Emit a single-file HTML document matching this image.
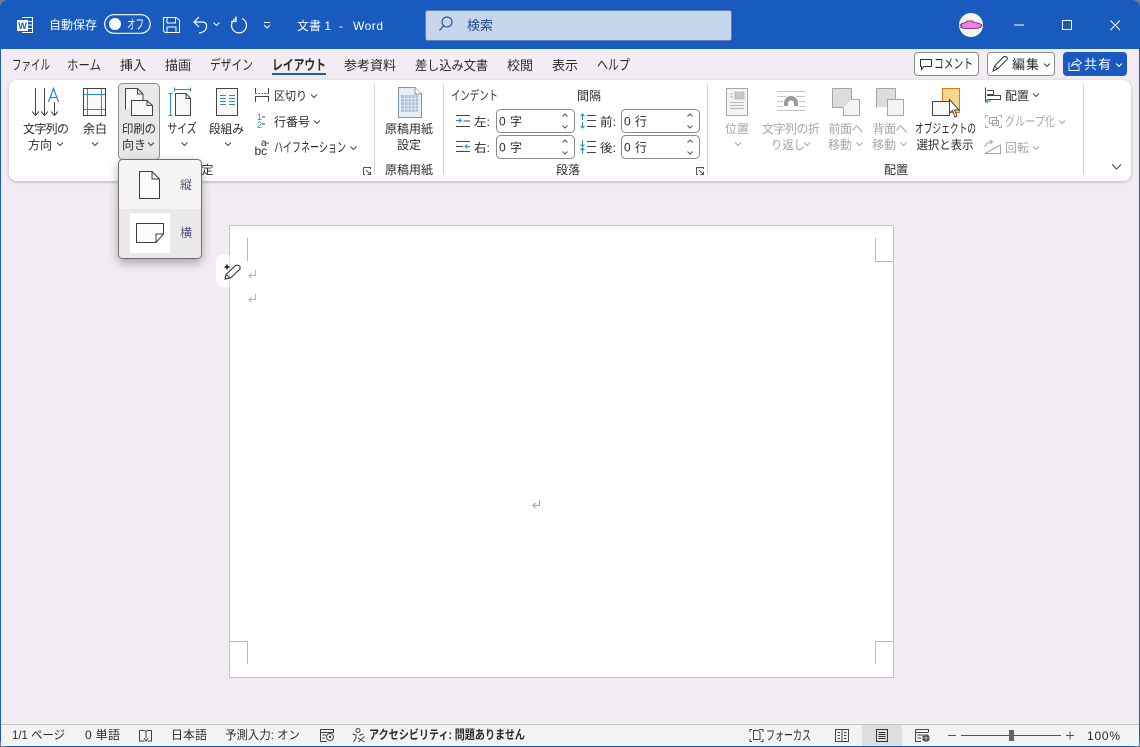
<!DOCTYPE html>
<html lang="ja"><head><meta charset="utf-8"><title>文書 1 - Word</title>
<style>
html,body{margin:0;padding:0;width:1140px;height:747px;overflow:hidden;background:#fff}
svg{display:block}
text{font-family:"Liberation Sans","Noto Sans CJK JP",sans-serif;font-size:12px;fill:#2b2b2b;dominant-baseline:auto}
.w text,text.w{fill:#fff}
.d text,text.d{fill:#a6a6a6}
.ln{fill:none;stroke:#444;stroke-width:1}
.bl{fill:none;stroke:#2a8ad4;stroke-width:1}
.gr{fill:none;stroke:#a6a6a6;stroke-width:1}
.chev{fill:none;stroke:#444;stroke-width:1}
.chevd{fill:none;stroke:#a6a6a6;stroke-width:1}
.box{fill:#fff;stroke:#8a8a8a;stroke-width:1}
.sp{fill:none;stroke:#555;stroke-width:1}
</style></head><body>
<svg width="1140" height="747" viewBox="0 0 1140 747" xmlns="http://www.w3.org/2000/svg">
<defs>
<filter id="sh" x="-5%" y="-20%" width="110%" height="140%"><feDropShadow dx="0" dy="1" stdDeviation="1.5" flood-color="#000" flood-opacity=".25"/></filter>
<filter id="sh2" x="-30%" y="-30%" width="160%" height="160%"><feDropShadow dx="0" dy="4" stdDeviation="5" flood-color="#000" flood-opacity=".3"/></filter>
<path id="cv" d="M-3 -1.5L0 1.5L3 -1.5"/>
<linearGradient id="rb" x1="0" y1="0" x2="1" y2="0"><stop offset="0" stop-color="#c8741c"/><stop offset=".35" stop-color="#2a5a8c"/><stop offset=".7" stop-color="#6a2a7c"/><stop offset="1" stop-color="#1a5a9c"/></linearGradient>
</defs>
<!-- window -->
<rect x="0" y="0" width="1140" height="747" fill="#6b7f9f"/>
<rect x="0" y="0" width="1140" height="747" rx="8" fill="#185abd"/>
<rect x="1" y="49" width="1138" height="697" rx="0" fill="#f3ecf3"/>
<path d="M1 738V724H1139V738Q1139 746 1131 746H9Q1 746 1 738Z" fill="#f3f3f3"/>
<path d="M1 724.5H1139" stroke="#c6c6c6"/>
<!-- title bar -->
<g class="w">
<path d="M22 17.5H32.5V32.5H22" fill="none" stroke="#fff"/><path d="M27 21.5H32M27 25H32M27 28.500H32" stroke="#fff"/>
<rect x="17" y="20" width="11" height="11" fill="#fff"/><text x="22.500" y="29" text-anchor="middle" style="font-size:9px;font-weight:bold;fill:#185abd">W</text>
<text x="49" y="29" textLength="48">自動保存</text>
<rect x="104.700" y="14.700" width="45.500" height="18.600" rx="9.300" fill="none" stroke="#fff" stroke-width="1.200"/>
<circle cx="115" cy="24" r="6" fill="#fff"/>
<text x="127" y="29" textLength="17" lengthAdjust="spacingAndGlyphs" style="font-size:13px">オフ</text>
<path d="M163.500 17.500H176L179.500 20V32.500H165L163.500 31ZM167 17.500V23H175.500V17.500M167 32.500V27H176V32.500" fill="none" stroke="#fff"/>
<path d="M199 17L194 22L199 27M194.500 22H202Q207 22 206.500 27Q206 32 199 33" fill="none" stroke="#fff" stroke-width="1.200"/>
<use href="#cv" x="216.500" y="24" fill="none" stroke="#fff"/>
<path d="M242 18.500A7.500 7.500 0 1 1 236 18.500M236 16.500V21.500H231" fill="none" stroke="#fff" stroke-width="1.200"/>
<path d="M264 22.500H270M264 25L267 28L270 25" fill="none" stroke="#fff"/>
<text x="297" y="30" textLength="34">文書 1</text><text x="339" y="30">-</text><text x="353" y="30" textLength="30">Word</text>
</g>
<rect x="425.500" y="10.500" width="306" height="30" rx="2" fill="#c6d6ec" stroke="#5e7fb0"/>
<circle cx="447" cy="22" r="5" fill="none" stroke="#1d4a8e" stroke-width="1.100"/><path d="M443.500 26L439.500 30.500" stroke="#1d4a8e" stroke-width="1.100"/>
<text x="467" y="30" textLength="26" style="font-size:13px;fill:#1f4a8c">検索</text>
<circle cx="971" cy="25" r="12" fill="#f5f7ef"/>
<path d="M960 25Q962 23 966 22.500L967 21H973V22.500Q979 22.500 982 25Q981 28.500 975 28.500H966Q963 28.500 960.500 27.500L962 26Z" fill="#f07cf0" stroke="#5b1a5b" stroke-width=".8"/>
<path d="M1014 25H1024" stroke="#fff"/>
<rect x="1062.500" y="20.500" width="9" height="9" fill="none" stroke="#fff"/>
<path d="M1110.500 20.500L1120 30M1120 20.500L1110.500 30" stroke="#fff"/>
<!-- tabs -->
<g style="font-size:13px">
<text x="12" y="70" textLength="38" lengthAdjust="spacingAndGlyphs" style="font-size:14px">ファイル</text>
<text x="67" y="70" textLength="34" lengthAdjust="spacingAndGlyphs" style="font-size:13.500px">ホーム</text>
<text x="120" y="70" textLength="26" style="font-size:13px">挿入</text>
<text x="165" y="70" textLength="26" style="font-size:13px">描画</text>
<text x="210" y="70" textLength="43" lengthAdjust="spacingAndGlyphs" style="font-size:14px">デザイン</text>
<text x="272" y="70" textLength="54" lengthAdjust="spacingAndGlyphs" style="font-size:14px;font-weight:bold">レイアウト</text>
<text x="344" y="70" textLength="52" style="font-size:13px">参考資料</text>
<text x="415" y="70" textLength="73" lengthAdjust="spacingAndGlyphs" style="font-size:13px">差し込み文書</text>
<text x="507" y="70" textLength="26" style="font-size:13px">校閲</text>
<text x="552" y="70" textLength="26" style="font-size:13px">表示</text>
<text x="597" y="70" textLength="33" lengthAdjust="spacingAndGlyphs" style="font-size:14px">ヘルプ</text>
</g>
<rect x="272" y="73" width="54" height="2" fill="#185abd"/>
<!-- top right buttons -->
<rect x="914.500" y="52.500" width="64" height="23" rx="3" fill="#fff" stroke="#8a8a8a"/>
<path d="M920.500 59.500H931.500V66.500H924L921.500 69.500V66.500H920.500Z" fill="none" stroke="#333"/>
<text x="934" y="68.500" textLength="39" lengthAdjust="spacingAndGlyphs" style="font-size:13.500px">コメント</text>
<rect x="987.500" y="52.500" width="67" height="23" rx="3" fill="#fff" stroke="#8a8a8a"/>
<path d="M993 71L994.500 66L1004 56.500Q1006 56 1007.500 58L1007 59.500L997.500 69ZM994.500 66L997.500 69" fill="none" stroke="#333"/>
<text x="1012" y="69" textLength="27" style="font-size:13px">編集</text>
<use href="#cv" x="1047" y="65" class="chev"/>
<rect x="1063" y="52" width="64" height="24" rx="4" fill="#185abd"/>
<path d="M1069 62.500V70.500H1079V66M1071.500 66Q1072.500 61.500 1077 61.500V59L1081.500 63L1077 66V64Q1074 64 1071.500 66Z" fill="none" stroke="#fff" stroke-width=".9"/>
<text x="1084" y="69" textLength="27" style="font-size:13px;fill:#fff">共有</text>
<use href="#cv" x="1119" y="65" fill="none" stroke="#fff"/>
<!-- ribbon -->
<rect x="9" y="80" width="1122" height="101" rx="8" fill="#fff" filter="url(#sh)"/>
<g stroke="#d4d4d4"><path d="M374.500 84V174M443.500 84V174M707.500 84V174M1083.500 84V174"/></g>
<!-- text direction -->
<g class="ln"><path d="M35.500 88V115M32 111.500L35.500 115.500L39 111.500M44.500 88V115M41 111.500L44.500 115.500L48 111.500M54.500 102V115M51 111.500L54.500 115.500L58 111.500"/></g>
<path d="M48.500 102L53.500 88.500L58.500 102M50 97.500H57" fill="none" stroke="#2a8ad4" stroke-width="1.200"/>
<text x="46" y="133" text-anchor="middle" textLength="46">文字列の</text>
<text x="40" y="149" text-anchor="middle" textLength="24">方向</text>
<use href="#cv" x="60" y="144" class="chev"/>
<!-- margins -->
<rect x="83.500" y="88.500" width="22" height="27" fill="#f8f8f8" stroke="#444"/>
<path d="M87.500 89V115M101.500 89V115M84 94.500H105M84 109.500H105" class="bl"/>
<text x="95" y="133" text-anchor="middle" textLength="24">余白</text>
<use href="#cv" x="95" y="144" class="chev"/>
<!-- orientation button -->
<rect x="118.500" y="83.500" width="41" height="76" rx="4" fill="#e8e8e8" stroke="#8c8c8c"/>
<path d="M125.500 109.500V88.500H137.500L143 94V100M137.500 88.500V94H143" fill="#f8f8f8" stroke="#444"/>
<path d="M131.500 100.500H147L152.500 105.500V115.500H131.500ZM147 100.500V105.500H152.500" fill="#f8f8f8" stroke="#444"/>
<text x="139" y="133" text-anchor="middle" textLength="34" lengthAdjust="spacingAndGlyphs">印刷の</text>
<text x="134" y="149" text-anchor="middle" textLength="24">向き</text>
<use href="#cv" x="151" y="144" class="chev"/>
<!-- size -->
<path d="M174 89.500H191M174.500 87.500V91.500M190.500 87.500V91.500M170.500 93V115.500M168.500 93.500H172.500M168.500 115.500H172.500" class="bl"/>
<path d="M175.500 93.500H186L190.500 98.500V115.500H175.500ZM186 93.500V98.500H190.500" fill="#f8f8f8" stroke="#444"/>
<text x="182" y="133" text-anchor="middle" textLength="29" lengthAdjust="spacingAndGlyphs" style="font-size:13px">サイズ</text>
<use href="#cv" x="184.500" y="144" class="chev"/>
<!-- columns -->
<rect x="216.500" y="88.500" width="21" height="27" fill="#f8f8f8" stroke="#444"/>
<path d="M220 95.500H226M229 95.500H235M220 98.500H226M229 98.500H235M220 101.500H226M229 101.500H235M220 104.500H226M229 104.500H235" stroke="#2a8ad4"/>
<text x="226.500" y="133" text-anchor="middle" textLength="35" lengthAdjust="spacingAndGlyphs">段組み</text>
<use href="#cv" x="228" y="144" class="chev"/>
<!-- breaks etc -->
<path d="M255.500 94V88M268.500 94V88M255.500 102V96.500M268.500 102V96.500M255 96.500H269" fill="none" stroke="#444"/><path d="M255 93.500H269" stroke="#2a8ad4" stroke-dasharray="2 1"/>
<text x="274" y="100" textLength="33" lengthAdjust="spacingAndGlyphs">区切り</text>
<use href="#cv" x="314" y="96" class="chev"/>
<text x="257" y="120" style="font-size:9px;fill:#2a8ad4">1</text><text x="257" y="128" style="font-size:9px;fill:#2a8ad4">2</text>
<path d="M262 117H265M262 124H265" stroke="#444"/>
<text x="274" y="126" textLength="36">行番号</text>
<use href="#cv" x="317" y="122" class="chev"/>
<text x="261" y="146" style="font-size:10px">a</text><text x="254.500" y="155" style="font-size:12px">bc</text>
<path d="M266 143H269" stroke="#444"/>
<text x="274" y="152" textLength="72" lengthAdjust="spacingAndGlyphs" style="font-size:13.500px">ハイフネーション</text>
<use href="#cv" x="353.500" y="148" class="chev"/>
<text x="207.500" y="174" text-anchor="middle" style="font-size:12px">定</text>
<path d="M363.500 167.500H370.500V169M363.500 167.500V174.500H365M366 170L370.500 174.500M370.500 171.500V174.500H367.500" fill="none" stroke="#555"/>
<!-- genkou -->
<path d="M398.500 87.500H415L421.500 94V117.500H398.500Z" fill="#e7edf5" stroke="#7c94b8"/>
<path d="M415 87.500V94H421.500" fill="#fff" stroke="#7c94b8"/>
<rect x="401" y="95" width="17" height="17" fill="#aebfd6"/>
<path d="M401 98.500H418M401 102H418M401 105.500H418M401 109H418M404.500 95V112M408 95V112M411.500 95V112M415 95V112" stroke="#e8edf4" stroke-width=".8"/>
<text x="409" y="133" text-anchor="middle" textLength="48">原稿用紙</text>
<text x="409" y="149" text-anchor="middle" textLength="24">設定</text>
<text x="409" y="174" text-anchor="middle" textLength="48">原稿用紙</text>
<!-- paragraph -->
<text x="451" y="100" textLength="47" lengthAdjust="spacingAndGlyphs" style="font-size:13px">インデント</text>
<text x="577" y="100" textLength="24">間隔</text>
<path d="M456 115.500H470M463.500 121H470M456 126.500H470" stroke="#444" fill="none"/>
<path d="M456 120.500H461M459 118.500L461.500 120.500L459 122.500" stroke="#2a8ad4" fill="none"/>
<path d="M456 141.500H470M456 146.500H463M456 151.500H470" stroke="#444" fill="none"/>
<path d="M465 146.500H470M467.500 144.500L465 146.500L467.500 148.500" stroke="#2a8ad4" fill="none"/>
<text x="474" y="126" textLength="16" lengthAdjust="spacingAndGlyphs">左:</text>
<text x="474" y="152" textLength="16" lengthAdjust="spacingAndGlyphs">右:</text>
<rect x="496.500" y="109.500" width="78" height="23" rx="4" class="box"/>
<rect x="496.500" y="135.500" width="78" height="23" rx="4" class="box"/>
<rect x="621.500" y="109.500" width="78" height="23" rx="4" class="box"/>
<rect x="621.500" y="135.500" width="78" height="23" rx="4" class="box"/>
<text x="499" y="125.500" textLength="23">0 字</text><text x="499" y="151.500" textLength="23">0 字</text>
<text x="624" y="125.500" textLength="23">0 行</text><text x="624" y="151.500" textLength="23">0 行</text>
<path d="M562.500 116.500L565 114L567.500 116.500M562.500 125.500L565 128L567.500 125.500M562.500 142.500L565 140L567.500 142.500M562.500 151.500L565 154L567.500 151.500M687.500 116.500L690 114L692.500 116.500M687.500 125.500L690 128L692.500 125.500M687.500 142.500L690 140L692.500 142.500M687.500 151.500L690 154L692.500 151.500" class="sp"/>
<path d="M582.500 114.500V120M580.500 116L582.500 114L584.500 116M582.500 122V127.500M580.500 126L582.500 128L584.500 126M582.500 140V146M580.500 144.500L582.500 146.500L584.500 144.500M582.500 148V154M580.500 150L582.500 148L584.500 150" class="bl"/>
<path d="M587 115.500H596M587 120.500H596M587 126.500H596M587 141.500H596M587 146.500H596M587 152.500H596" stroke="#444"/>
<text x="600" y="126" textLength="16" lengthAdjust="spacingAndGlyphs">前:</text>
<text x="600" y="152" textLength="16" lengthAdjust="spacingAndGlyphs">後:</text>
<text x="568" y="174" text-anchor="middle" textLength="24">段落</text>
<path d="M696.500 167.500H703.500V169M696.500 167.500V174.500H698M699 170L703.500 174.500M703.500 171.500V174.500H700.500" fill="none" stroke="#555"/>
<!-- arrange -->
<rect x="726.500" y="88.500" width="21" height="27" fill="#f3f3f3" stroke="#a6a6a6"/>
<rect x="735" y="92" width="9" height="7" fill="#c8c8c8" stroke="#a6a6a6" stroke-width=".6"/>
<path d="M730 94H733M730 97H733M730 102.500H744M730 105.500H744M730 108.500H744" stroke="#b8b8b8"/>
<g class="d"><text x="737" y="133" text-anchor="middle" textLength="24">位置</text></g>
<use href="#cv" x="738" y="144" class="chevd"/>
<path d="M777 91.500H805M777 96.500H786M796 96.500H805M777 101.500H783M799 101.500H805M777 106.500H783M799 106.500H805M777 110.500H805" stroke="#c4c4c4"/>
<path d="M784 106V103A7 7 0 0 1 798 103V106H794V103.500A3 3 0 0 0 788 103.500V106Z" fill="#9a9a9a"/>
<g class="d"><text x="791" y="133" text-anchor="middle" textLength="58">文字列の折</text>
<text x="788" y="149" text-anchor="middle" textLength="34" lengthAdjust="spacingAndGlyphs">り返し</text></g>
<use href="#cv" x="807" y="144" class="chevd"/>
<rect x="832.500" y="88.500" width="19" height="19" fill="#dcdcdc" stroke="#a6a6a6"/>
<path d="M851.500 99.500H859.500V115.500H843.500V107.500" fill="#f3f3f3" stroke="#a6a6a6"/>
<g class="d"><text x="846" y="133" text-anchor="middle" textLength="35">前面へ</text>
<text x="840" y="149" text-anchor="middle" textLength="24">移動</text></g>
<use href="#cv" x="859.500" y="144" class="chevd"/>
<path d="M876.500 107.500V88.500H895.500V99.500" fill="#dcdcdc" stroke="#a6a6a6"/><rect x="877" y="89" width="18" height="18" fill="#dcdcdc"/>
<rect x="887.500" y="99.500" width="16" height="16" fill="#f3f3f3" stroke="#a6a6a6"/>
<g class="d"><text x="890" y="133" text-anchor="middle" textLength="35">背面へ</text>
<text x="884" y="149" text-anchor="middle" textLength="24">移動</text></g>
<use href="#cv" x="903.500" y="144" class="chevd"/>
<rect x="942.500" y="88.500" width="17" height="24" fill="#fbd88e" stroke="#d97b14"/>
<rect x="932.500" y="101.500" width="17" height="14" fill="#f8f8f8" stroke="#444"/>
<path d="M949.500 99.500V113L952.500 110.500L955 117L957 116L954.500 110H959Z" fill="#fff" stroke="#444"/>
<text x="945.500" y="133" text-anchor="middle" textLength="61" lengthAdjust="spacingAndGlyphs" style="font-size:13px">オブジェクトの</text>
<text x="945" y="149" text-anchor="middle" textLength="57" lengthAdjust="spacingAndGlyphs">選択と表示</text>
<path d="M985.500 87.500V102.500M987 90.500H993.500V94.500H987M987 95.500H1000.500V99.500H987" fill="none" stroke="#444"/><path d="M986 101H991M988 99L986 101L988 103" stroke="#2a8ad4" fill="none"/>
<text x="1005" y="100" textLength="24">配置</text>
<use href="#cv" x="1036" y="95" class="chev"/>
<path d="M985.500 115.500H988M985.500 115.500V118M1001.500 115.500H999M1001.500 115.500V118M985.500 127.500V125M985.500 127.500H988M1001.500 127.500V125M1001.500 127.500H999" class="gr"/>
<rect x="989.500" y="117.500" width="7" height="6" class="gr"/><rect x="992.500" y="120.500" width="6" height="5" class="gr"/>
<g class="d"><text x="1005" y="126" textLength="50" lengthAdjust="spacingAndGlyphs" style="font-size:13px">グループ化</text>
<text x="1005" y="152" textLength="24">回転</text></g>
<use href="#cv" x="1062" y="122" class="chevd"/>
<use href="#cv" x="1036" y="148" class="chevd"/>
<path d="M985 153.500H1000.500V145L985 153.500M985 147Q986 142 992 142M990 140L992.500 142L990 144" fill="none" stroke="#a6a6a6"/>
<text x="896" y="174" text-anchor="middle" textLength="24">配置</text>
<path d="M1112 164.500L1116.500 169L1121 164.500" fill="none" stroke="#444"/>
<!-- page -->
<rect x="229.500" y="225.500" width="664" height="452" fill="#fff" stroke="#c4c4c4"/>
<path d="M247.500 238V261M875.500 238V261.500H893M230 641.500H247.500V664M875.500 664V641.500H893" fill="none" stroke="#b8b8b8"/>
<path d="M255.500 270V275.500H249M251.500 273L249 275.500L251.500 278" fill="none" stroke="#b0b0b0"/>
<path d="M255.500 294V299.500H249M251.500 297L249 299.500L251.500 302" fill="none" stroke="#b0b0b0"/>
<path d="M539.500 500V505.500H533M535.500 503L533 505.500L535.500 508" fill="none" stroke="#a0a0a0"/>
<!-- assist tool -->
<path d="M246 255H224Q216 255 216 263V279Q216 287 224 287H229.500V255Z" fill="#fff"/>
<path d="M225 279L226 274.500L235.500 265.500Q238 264.500 240 266.500L240 269L230.500 278ZM226 274.500L230 278" fill="none" stroke="#333" stroke-width="1.100"/>
<path d="M227 263.500L228 266L230.500 267L228 268L227 270.500L226 268L223.500 267L226 266Z" fill="#222"/>
<!-- dropdown -->
<rect x="118.500" y="159.500" width="83" height="99" rx="4" fill="#f5f5f5" stroke="#6e6e6e" filter="url(#sh2)"/>
<path d="M119 209H201V254Q201 258 197 258H123Q119 258 119 254Z" fill="#e9e9e9"/>
<rect x="130" y="213" width="40" height="40" fill="#fff"/>
<path d="M139.500 171.500H152L159.500 179V198.500H139.500ZM152 171.500V179H159.500" fill="#fbfbfb" stroke="#3c3c3c"/>
<path d="M136.500 223.500H163.500V234L156 242.500H136.500ZM163.500 234H156V242.500" fill="#fbfbfb" stroke="#3c3c3c"/>
<text x="186" y="189" text-anchor="middle" style="font-size:12px;fill:url(#rb)">縦</text>
<text x="186" y="237" text-anchor="middle" style="font-size:12px;fill:url(#rb)">横</text>
<!-- status bar -->
<g style="font-size:12px">
<text x="12" y="739" textLength="53" lengthAdjust="spacingAndGlyphs">1/1 ページ</text>
<text x="85" y="739" textLength="35">0 単語</text>
<path d="M139.500 730.500H144.500L146 731.500L147.500 730.500H151.500V741H147.500M144.500 741H139.500V730.500M146 732V738M144 738L146 741L148 738" fill="none" stroke="#444"/>
<text x="171" y="739" textLength="36">日本語</text>
<text x="225" y="739" textLength="75" lengthAdjust="spacingAndGlyphs">予測入力: オン</text>
<path d="M320.500 729.500H333.500V732.500H320.500ZM320.500 732.500V741.500H327M322.500 735H326M322.500 738H325" fill="none" stroke="#444"/>
<circle cx="330" cy="737" r="3.500" fill="none" stroke="#444"/><circle cx="330" cy="737" r="1.200" fill="#444"/>
<circle cx="358" cy="730.500" r="2" fill="none" stroke="#444"/>
<path d="M352.500 734L356 735V738L353.500 742M363.500 734L360 735V736M358 738L364.500 742M364.500 736.500L358.500 742" fill="none" stroke="#444"/>
<text x="369" y="739" textLength="156" lengthAdjust="spacingAndGlyphs" style="font-weight:bold;font-size:12.500px">アクセシビリティ: 問題ありません</text>
<path d="M752 729.500H750V732M759 729.500H761M750 739V741.500H752M761 741.500H763V739M763 732V729.500H761" fill="none" stroke="#444"/>
<path d="M753.500 730.500H758.500L760 732.500V739.500H753.500Z" fill="none" stroke="#444"/>
<text x="766" y="740" textLength="45" lengthAdjust="spacingAndGlyphs" style="font-size:13.500px">フォーカス</text>
<path d="M835.500 729.500H848.500V741.500H835.500ZM842 729.500V741.500M837.500 732.500H840M837.500 735.500H840M837.500 738.500H840M844 732.500H846.500M844 735.500H846.500M844 738.500H846.500" fill="none" stroke="#444"/>
<rect x="862" y="725" width="40" height="21" fill="#dedede"/>
<path d="M876.500 729.500H887.500V741.500H876.500ZM878.500 732.500H885.500M878.500 734.500H885.500M878.500 736.500H885.500M878.500 738.500H885.500" fill="none" stroke="#333"/>
<path d="M915.500 729.500H928.500V732M915.500 732.500H928.500M915.500 729.500V741.500H921M917.500 735H923M917.500 738H921" fill="none" stroke="#444"/>
<circle cx="926" cy="738" r="3.800" fill="#444"/><path d="M922.500 738H929.500M926 734.500V741.500" stroke="#ddd" stroke-width=".7"/>
<path d="M948 735.500H956M961 735.500H1061M1066 735.500H1074M1070 731.500V739.500" stroke="#555"/>
<rect x="1009" y="730" width="5" height="11" fill="#666"/>
<text x="1087" y="740" textLength="33">100%</text>
</g>
</svg>
</body></html>
